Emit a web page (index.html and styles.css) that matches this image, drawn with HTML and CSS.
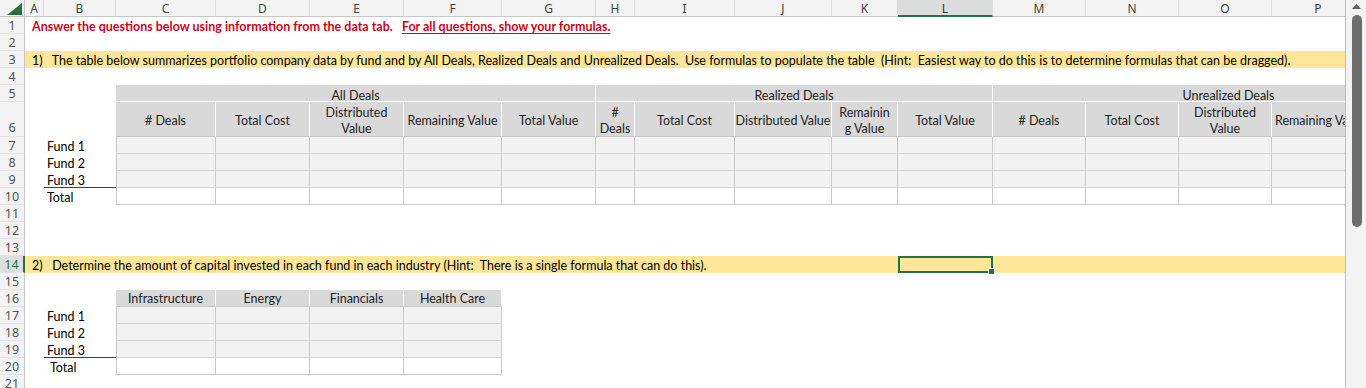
FILE: index.html
```html
<!DOCTYPE html>
<html lang="en">
<head>
  <meta charset="UTF-8" />
  <title>Questions</title>
  <link rel="stylesheet" href="styles.css">
</head>
<body>

<div class="app">
  <div class="sheet">
    <div class="grid">
      <!-- column headers -->
      <div class="corner"><svg width="25" height="17" viewBox="0 0 25 17"><polygon points="7,15 22,15 22,3" fill="#2e6e40"/></svg></div>
      <div class="ch">A</div><div class="ch">B</div><div class="ch">C</div><div class="ch">D</div>
      <div class="ch">E</div><div class="ch">F</div><div class="ch">G</div><div class="ch">H</div>
      <div class="ch">I</div><div class="ch">J</div><div class="ch">K</div><div class="ch ch-sel">L</div>
      <div class="ch">M</div><div class="ch">N</div><div class="ch">O</div><div class="ch">P</div>

      <!-- row 1 -->
      <div class="rn">1</div>
      <div class="full note">Answer the questions below using information from the data tab.&nbsp;&nbsp; <span class="ul">For all questions, show your formulas.</span></div>
      <!-- row 2 -->
      <div class="rn">2</div><div class="full"></div>
      <!-- row 3 -->
      <div class="rn">3</div>
      <div class="full band">1)&nbsp;&nbsp; The table below summarizes portfolio company data by fund and by All Deals, Realized Deals and Unrealized Deals.&nbsp; Use formulas to populate the table&nbsp; (Hint:&nbsp; Easiest way to do this is to determine formulas that can be dragged).</div>
      <!-- row 4 -->
      <div class="rn">4</div><div class="full"></div>

      <!-- row 5 -->
      <div class="rn">5</div>
      <div class="sp2"></div>
      <div class="grp sp5">All Deals</div>
      <div class="grp sp5">Realized Deals</div>
      <div class="grp sp4 grp-unreal">Unrealized Deals</div>

      <!-- row 6 -->
      <div class="rn rn-tall">6</div>
      <div class="sp2"></div>
      <div class="hd"># Deals</div>
      <div class="hd">Total Cost</div>
      <div class="hd">Distributed<br>Value</div>
      <div class="hd">Remaining Value</div>
      <div class="hd">Total Value</div>
      <div class="hd">#<br>Deals</div>
      <div class="hd">Total Cost</div>
      <div class="hd">Distributed Value</div>
      <div class="hd">Remainin<br>g Value</div>
      <div class="hd">Total Value</div>
      <div class="hd"># Deals</div>
      <div class="hd">Total Cost</div>
      <div class="hd">Distributed<br>Value</div>
      <div class="hd hd-clip">Remaining Value</div>

      <!-- rows 7-10 -->
      <div class="rn">7</div><div></div><div class="lbl">Fund 1</div>
      <div class="d d-first"></div><div class="d"></div><div class="d"></div><div class="d"></div><div class="d"></div>
      <div class="d"></div><div class="d"></div><div class="d"></div><div class="d"></div><div class="d"></div>
      <div class="d"></div><div class="d"></div><div class="d"></div><div class="d"></div>

      <div class="rn">8</div><div></div><div class="lbl">Fund 2</div>
      <div class="d d-first"></div><div class="d"></div><div class="d"></div><div class="d"></div><div class="d"></div>
      <div class="d"></div><div class="d"></div><div class="d"></div><div class="d"></div><div class="d"></div>
      <div class="d"></div><div class="d"></div><div class="d"></div><div class="d"></div>

      <div class="rn">9</div><div></div><div class="lbl lbl-line">Fund 3</div>
      <div class="d d-first"></div><div class="d"></div><div class="d"></div><div class="d"></div><div class="d"></div>
      <div class="d"></div><div class="d"></div><div class="d"></div><div class="d"></div><div class="d"></div>
      <div class="d"></div><div class="d"></div><div class="d"></div><div class="d"></div>

      <div class="rn">10</div><div></div><div class="lbl">Total</div>
      <div class="d d-first w"></div><div class="d w"></div><div class="d w"></div><div class="d w"></div><div class="d w"></div>
      <div class="d w"></div><div class="d w"></div><div class="d w"></div><div class="d w"></div><div class="d w"></div>
      <div class="d w"></div><div class="d w"></div><div class="d w"></div><div class="d w"></div>

      <!-- rows 11-13 -->
      <div class="rn">11</div><div class="full"></div>
      <div class="rn">12</div><div class="full"></div>
      <div class="rn">13</div><div class="full"></div>

      <!-- row 14 -->
      <div class="rn rn-sel">14</div>
      <div class="sp11 band">2)&nbsp;&nbsp; Determine the amount of capital invested in each fund in each industry (Hint:&nbsp; There is a single formula that can do this).</div>
      <div class="band active"><span class="handle"></span></div>
      <div class="sp4 band"></div>

      <!-- row 15 -->
      <div class="rn">15</div><div class="full"></div>

      <!-- row 16 -->
      <div class="rn">16</div>
      <div class="sp2"></div>
      <div class="hd hd-one">Infrastructure</div>
      <div class="hd hd-one">Energy</div>
      <div class="hd hd-one">Financials</div>
      <div class="hd hd-one">Health Care</div>
      <div class="sp10"></div>

      <!-- rows 17-20 -->
      <div class="rn">17</div><div></div><div class="lbl">Fund 1</div>
      <div class="d d-first"></div><div class="d"></div><div class="d"></div><div class="d"></div><div class="sp10"></div>
      <div class="rn">18</div><div></div><div class="lbl">Fund 2</div>
      <div class="d d-first"></div><div class="d"></div><div class="d"></div><div class="d"></div><div class="sp10"></div>
      <div class="rn">19</div><div></div><div class="lbl lbl-line">Fund 3</div>
      <div class="d d-first"></div><div class="d"></div><div class="d"></div><div class="d"></div><div class="sp10"></div>
      <div class="rn">20</div><div></div><div class="lbl lbl-indent">Total</div>
      <div class="d d-first w"></div><div class="d w"></div><div class="d w"></div><div class="d w"></div><div class="sp10"></div>

      <!-- row 21 -->
      <div class="rn">21</div><div class="full"></div>
    </div>
  </div>

  <div class="vscroll">
    <svg class="arrow" width="21" height="12" viewBox="0 0 21 12"><polygon points="6,9 15,9 10.5,4" fill="#606060"/></svg>
    <div class="thumb"></div>
  </div>
</div>

</body>
</html>
```

FILE: styles.css
```css
body {
  margin: 0;
  font-family: Lato, "Liberation Sans", sans-serif;
  font-size: 12.5px;
  color: #000;
  background: #fff;
  overflow: hidden;
}

.app {
  display: flex;
  height: 388px;
  overflow: hidden;
}

.sheet {
  width: 1345px;
  flex: none;
  overflow: hidden;
}

.grid {
  display: grid;
  width: 1365px;
  grid-template-columns: 25px 19px 72px 100px 94px 94px 98px 94px 39px 100px 97px 66px 95px 93px 93px 93px 93px;
  grid-template-rows: 17px repeat(5, 17px) 35px repeat(15, 17px);
}

.grid > div {
  box-sizing: border-box;
  white-space: nowrap;
  overflow: hidden;
  line-height: 17px;
}

/* headers of the sheet */
.corner {
  background: #f3f3f3;
  border-right: 1px solid #c6c6c6;
  border-bottom: 1px solid #c6c6c6;
}
.corner svg { display: block; }

.ch {
  background: #f3f3f3;
  border-right: 1px solid #dadada;
  border-bottom: 1px solid #c6c6c6;
  text-align: center;
  font-family: "Noto Sans", sans-serif;
  font-size: 12px;
  color: #444;
}
.ch-sel {
  background: #dcdcdc;
  border-bottom: 2px solid #217346;
  color: #333;
}

.rn {
  background: #f3f3f3;
  border-right: 1px solid #c6c6c6;
  border-bottom: 1px solid #e2e2e2;
  text-align: center;
  font-family: "Noto Sans", sans-serif;
  font-size: 12.5px;
  color: #555;
}
.rn-tall {
  display: flex;
  align-items: flex-end;
  justify-content: center;
}
.rn-sel {
  background: #dedede;
  border-right: 2px solid #217346;
  color: #217346;
}

/* spans */
.full { grid-column: span 16; }
.sp2 { grid-column: span 2; }
.sp4 { grid-column: span 4; }
.sp5 { grid-column: span 5; }
.sp10 { grid-column: span 10; }
.sp11 { grid-column: span 11; }

.note {
  padding-left: 7px;
  padding-top: 1px;
  color: #d0021b;
  font-weight: bold;
}
.ul {
  text-decoration: underline;
  text-underline-offset: 2px;
}

.band {
  background: #ffe699;
  padding-left: 7px;
  padding-top: 1px;
}

.active {
  position: relative;
  padding: 0;
  overflow: visible !important;
  border: 2px solid #217346;
}
.handle {
  position: absolute;
  right: -4px;
  bottom: -4px;
  width: 5px;
  height: 5px;
  background: #217346;
  border: 1px solid #fff;
}

/* tables */
.grp {
  background: #d9d9d9;
  border-right: 1px solid #fff;
  border-bottom: 1px solid #fff;
  padding-top: 2px;
  text-align: center;
  color: #222;
}
.grp-unreal { padding-left: 100px; }

.hd {
  display: flex;
  align-items: center;
  justify-content: center;
  text-align: center;
  background: #d9d9d9;
  border-right: 1px solid #fff;
  border-bottom: 1px solid #c8c8c8;
  padding-top: 3px;
  line-height: 16px !important;
  color: #222;
}
.hd-one { padding-top: 1px; }
.hd-clip { justify-content: flex-start; padding-left: 3px; }

.d {
  background: #f2f2f2;
  border-right: 1px solid #cacaca;
  border-bottom: 1px solid #d4d4d4;
}
.d-first { border-left: 1px solid #cacaca; }
.d.w {
  background: #fff;
  border-bottom: 1px solid #c8c8c8;
}

.lbl {
  padding-left: 3px;
  padding-top: 1px;
}
.lbl-line { border-bottom: 1px solid #404040; }
.lbl-indent { padding-left: 6px; }

/* scrollbar */
.vscroll {
  flex: 1;
  display: flex;
  flex-direction: column;
  align-items: center;
  background: #f3f3f3;
  border-left: 1px solid #bdbdbd;
}
.arrow { display: block; }
.thumb {
  width: 10px;
  height: 212px;
  margin-top: 3px;
  border-radius: 5px;
  background: #6d6d6d;
}
```
